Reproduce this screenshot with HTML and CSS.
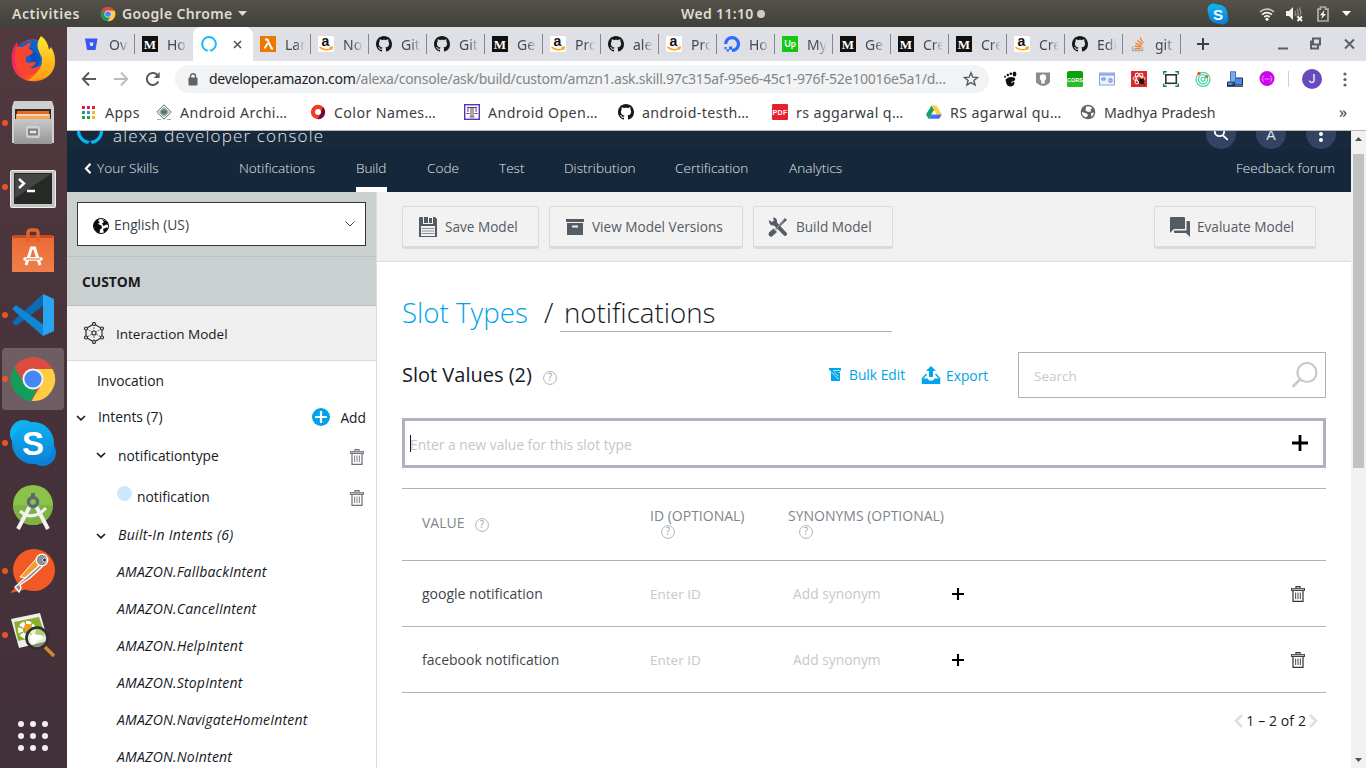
FILE: index.html
```html
<!DOCTYPE html>
<html lang="en">
<head>
<meta charset="utf-8">
<title>Alexa Developer Console</title>
<link rel="stylesheet" href="styles.css">
</head>
<body>
<svg class="defs" width="0" height="0">
  <symbol id="chrome" viewBox="0 0 48 48">
    <circle cx="24" cy="24" r="22" fill="#dd4b3e"/>
    <path d="M24 14H43.6A22 22 0 0 1 22.5 46L32.7 29A10 10 0 0 0 24 14z" fill="#ffcd41"/>
    <path d="M5.5 12.2L15.3 29A10 10 0 0 0 28 33.2L22.5 46A22 22 0 0 1 5.5 12.2z" fill="#119e5a"/>
    <circle cx="24" cy="24" r="10.5" fill="#f4f4f4"/><circle cx="24" cy="24" r="8.6" fill="#4587f4"/>
  </symbol>
  <symbol id="skype" viewBox="0 0 48 48">
    <circle cx="14.500" cy="14.500" r="13.500" fill="#0db3f0"/><circle cx="33.500" cy="33.500" r="13.500" fill="#0a80d8"/><circle cx="24" cy="24" r="21" fill="url(#sky)"/>
    <text x="24" y="36" text-anchor="middle" class="logo-s">S</text>
  </symbol>
  <linearGradient id="sky" x1="0" y1="0" x2="0" y2="1"><stop offset="0" stop-color="#0db3f0"/><stop offset="1" stop-color="#0c80d8"/></linearGradient>
  <linearGradient id="ff" x1="0" y1="0.3" x2="1" y2="0.5"><stop offset="0" stop-color="#e8246c"/><stop offset=".45" stop-color="#fb4a2c"/><stop offset="1" stop-color="#ffb41c"/></linearGradient>
  <linearGradient id="ff2" x1="0" y1="0" x2="0" y2="1"><stop offset="0" stop-color="#ffe92f"/><stop offset="1" stop-color="#ff9a10"/></linearGradient>
  <linearGradient id="steel" x1="0" y1="0" x2="0" y2="1"><stop offset="0" stop-color="#c9c9c9"/><stop offset="1" stop-color="#969696"/></linearGradient>
  <linearGradient id="bag" x1="0" y1="0" x2="0" y2="1"><stop offset="0" stop-color="#ea6a34"/><stop offset="1" stop-color="#f07f4b"/></linearGradient>
  <symbol id="github" viewBox="0 0 16 16"><path fill="#16181b" d="M8 0C3.58 0 0 3.58 0 8c0 3.54 2.29 6.53 5.47 7.59.4.07.55-.17.55-.38 0-.19-.01-.82-.01-1.49-2.01.37-2.53-.49-2.69-.94-.09-.23-.48-.94-.82-1.13-.28-.15-.68-.52-.01-.53.63-.01 1.08.58 1.23.82.72 1.21 1.87.87 2.33.66.07-.52.28-.87.51-1.07-1.78-.2-3.64-.89-3.64-3.95 0-.87.31-1.59.82-2.15-.08-.2-.36-1.02.08-2.12 0 0 .67-.21 2.2.82.64-.18 1.32-.27 2-.27s1.36.09 2 .27c1.53-1.04 2.2-.82 2.2-.82.44 1.1.16 1.92.08 2.12.51.56.82 1.27.82 2.15 0 3.07-1.87 3.75-3.65 3.95.29.25.54.73.54 1.48 0 1.07-.01 1.93-.01 2.2 0 .21.15.46.55.38A8.01 8.01 0 0 0 16 8c0-4.42-3.58-8-8-8z"/></symbol>
  <symbol id="medium" viewBox="0 0 16 16"><rect width="16" height="16" fill="#12100e"/><text x="8" y="12.5" text-anchor="middle" class="logo-m">M</text></symbol>
  <symbol id="amazon" viewBox="0 0 16 16"><rect width="16" height="16" rx="2" fill="#fff"/><text x="7.5" y="9.8" text-anchor="middle" class="logo-a">a</text><path d="M1.5 11.2Q7.5 15.8 13 12.4M11.5 11.6l2.7-.3-.8 2.4" fill="none" stroke="#f9a51a" stroke-width="1.5"/></symbol>
  <symbol id="trash" viewBox="0 0 14 16"><path d="M5 2V.7h4V2M.7 4.3V2.5h12.6v1.8zM2 4.5v10.8h10V4.5" fill="none" stroke="currentColor" stroke-width="1.2"/><path d="M1 3.4h12" stroke="#bbb" stroke-width="1.4"/><path d="M4.6 6.5v6.6M7 6.5v6.6M9.4 6.5v6.6" stroke="currentColor" stroke-width="1.1" opacity=".8"/></symbol>
  <symbol id="help" viewBox="0 0 14 14"><circle cx="7" cy="7" r="6.4" fill="#fff" stroke="#aab7b8" stroke-width="1"/><text x="7" y="10.4" text-anchor="middle" class="help-q">?</text></symbol>
  <symbol id="chev" viewBox="0 0 10 8"><path d="M1 2l4 3.8L9 2" fill="none" stroke="#16191f" stroke-width="1.6"/></symbol>
  <symbol id="plus" viewBox="0 0 16 16"><path d="M8 0v16M0 8h16" stroke="#000" stroke-width="2.800"/></symbol>
</svg>

<header class="topbar">
  <span class="activities">Activities</span>
  <svg class="tb-chrome" width="16" height="16"><use href="#chrome"/></svg>
  <span class="appname">Google Chrome</span>
  <svg class="tb-caret" width="9" height="5"><path d="M0 0h9L4.5 5z" fill="#dfdbd2"/></svg>
  <span class="clock">Wed 11:10</span><i class="clock-dot"></i>
  <span class="tray">
    <svg width="22" height="22"><use href="#skype"/></svg>
    <svg class="wifi" width="16" height="16" viewBox="0 0 16 16" fill="none" stroke="#f2f1ee" stroke-width="1.6"><path d="M1 5.8Q8 .5 15 5.8" opacity=".75"/><path d="M3 8.6Q8 4.6 13 8.6M5.2 11Q8 8.8 10.8 11"/><circle cx="8" cy="13.3" r="1.5" fill="#fff" stroke="none"/></svg>
    <svg class="vol" width="18" height="16" viewBox="0 0 18 16"><path d="M0 5h3l4-4v13L3 10H0z" fill="#f2f1ee"/><path d="M9 5q1.5 2.5 0 5M11 3q2.6 4.5 0 8M13 1.5q3 4.5 1 8" fill="none" stroke="#8e8b85" stroke-width="1.4"/><path d="M11.5 10.5l4.5 4.5m0-4.5L11.5 15" stroke="#fff" stroke-width="1.8"/></svg>
    <svg class="bat" width="12" height="16" viewBox="0 0 12 16"><path d="M1 3.2h2.5V1h5v2.2H11V15H1z" fill="none" stroke="#b1afa9" stroke-width="1.7"/><path d="M7.5 4L3 9.2h2.5L4.2 13 9 8H6.4z" fill="#fff"/></svg>
    <svg class="arrow" width="9" height="5"><path d="M0 0h9L4.5 5z" fill="#fff"/></svg>
  </span>
</header>

<div class="desktop">
<nav class="dock">
  <svg class="app" viewBox="0 0 67 64"><path d="M17 15l1 5Q24 12 33 12.500q6 0 9 2.500l6 6q7 7 7 14a21.500 19.500 0 0 1-43 0q-2-12 5-20z" fill="url(#ff)"/><path d="M19 19q6-6 14-6t11 5q3 6 2 14-2 10-11 10-8-1-12-7z" fill="#0c62cf"/><path d="M28 20q8 3 12 11-1 9-8 10z" fill="#0a3f9e" opacity=".5"/><path d="M16 20h7q4-4 8-5l-2 7 4 2q0 4-6 5-3 5 1 7 4-1 8-1-1 5-7 5 5 3 12-2-3 10-13 10Q15 46 15 30z" fill="#f9452f"/><path d="M41 9q-5 7-3 13 2 5 4 9 1 12-12 21-2 1-4 1 6 2 14-1 14-5 15-18 0-8-4-14l-2 3Q48 14 41 9z" fill="url(#ff2)"/></svg>
  <svg class="app" viewBox="0 0 67 64"><circle cx="5" cy="32" r="3" fill="#e95420"/><path d="M14 10h38l2 6v36H12V16z" fill="#cfcfcf"/><path d="M15 18h36v13H15z" fill="#2f2b29"/><path d="M17 20h32v8H17z" fill="#e06a22"/><path d="M16 23h34v6H16z" fill="#f4a75c"/><path d="M17 24h32" stroke="#fff"/><path d="M14 28h38v25H14z" fill="url(#steel)"/><rect x="27" y="36" width="12" height="10" rx="1.5" fill="#aaa" stroke="#ddd" stroke-width="1.5"/><rect x="29" y="39" width="8" height="4" fill="#e5e5e5" stroke="#555"/></svg>
  <svg class="app" viewBox="0 0 67 64"><circle cx="5" cy="32" r="3" fill="#e95420"/><rect x="10.5" y="15.5" width="45" height="37" rx="1" fill="#c3c5c3" stroke="#eee"/><path d="M14 18h38v31H14z" fill="#272927"/><path d="M15 19h36L15 43z" fill="#444644"/><path d="M19 24l5 4.5-5 4.5M27 36h8" stroke="#fff" stroke-width="2.4" fill="none"/></svg>
  <svg class="app" viewBox="0 0 67 64"><path d="M12 17h42v36H12z" fill="url(#bag)"/><path d="M12 19l2-3h38l2 3z" fill="#c84d1d"/><path d="M28 23v-9q0-3 3-3h4q3 0 3 3v9" fill="none" stroke="#e2622e" stroke-width="3.5"/><path d="M26 46l5.5-17h3L40 46M28 39.5h10" fill="none" stroke="#fff" stroke-width="3"/><path d="M25 40h16" stroke="#fff" stroke-width="3.6" stroke-linecap="round"/><path d="M26 40h14" stroke="#ef7a45" stroke-width="1.200"/></svg>
  <svg class="app" viewBox="0 0 67 64"><circle cx="5" cy="32" r="3" fill="#e95420"/><path d="M43 11L12 39l4 4 27-20z" fill="#0a6bb3"/><path d="M12 26l4-4 28 20-1 11z" fill="#0f87d2"/><path d="M43 11l11 5v32l-11 5z" fill="#2aa4f0"/></svg>
  <svg class="app" viewBox="0 0 67 64"><rect x="2" y="1" width="62" height="62" rx="4" fill="#6e5e64"/><circle cx="5" cy="32" r="3" fill="#e95420"/><use href="#chrome" x="9" y="8" width="48" height="48"/></svg>
  <svg class="app" viewBox="0 0 67 64"><circle cx="5" cy="32" r="3" fill="#e95420"/><use href="#skype" x="9" y="8" width="48" height="48"/></svg>
  <svg class="app" viewBox="0 0 67 64"><circle cx="33" cy="30" r="20" fill="#8bc34a"/><path d="M13 30a20 20 0 0 0 40 0z" fill="#7cb342"/><path d="M30 31L18 54M36 31l12 23" stroke="#f1f1f1" stroke-width="4"/><path d="M20 36q13 11 26-3" fill="none" stroke="#f1f1f1" stroke-width="3"/><circle cx="33" cy="27" r="4.5" fill="none" stroke="#5d6b70" stroke-width="3.5"/><path d="M31 18h4v4h-4z" fill="#5d6b70"/></svg>
  <svg class="app" viewBox="0 0 67 64"><circle cx="5" cy="32" r="3" fill="#e95420"/><path d="M10 54l12-12 6 8z" fill="#f15a24"/><circle cx="34" cy="31" r="21" fill="#f15a24"/><path d="M36 20l3 6-11 13-8-1z" fill="#f99a2c" stroke="#fff"/><path d="M42 24L23 41l-8 7 4 5 2-4-1-3 10-7 12-11z" fill="#8d8f92" stroke="#fff" stroke-width="1.4"/><circle cx="42" cy="21" r="5.8" fill="#8d8f92" stroke="#fff" stroke-width="1.3"/><circle cx="44.5" cy="21" r="2" fill="#333" stroke="#fff" stroke-width=".8"/></svg>
  <svg class="app" viewBox="0 0 67 64"><circle cx="5" cy="32" r="3" fill="#e95420"/><path d="M11 16l29-6 8 28-29 7z" fill="#eee"/><path d="M14 19l25-5 6 18-27 6z" fill="#8fae2c"/><circle cx="27" cy="27" r="6.500" fill="none" stroke="#fff" stroke-width="5" stroke-dasharray="4.500 1.300"/><circle cx="28" cy="25" r="4" fill="#f29c1c"/><circle cx="37" cy="35" r="10.500" fill="#d5e6ad" fill-opacity=".5" stroke="#2c3034" stroke-width="2.600"/><path d="M30 34q3-6 7-2 6-1 6 4l-6 2-3 4q-4-2-4-8z" fill="#fff"/><path d="M45 44l9 9" stroke="#cf8b2f" stroke-width="3.500"/></svg>
  <svg class="grid-btn" width="32" height="32" viewBox="0 0 32 32" fill="#f2f0f0"><circle cx="4" cy="4" r="3"/><circle cx="16" cy="4" r="3"/><circle cx="28" cy="4" r="3"/><circle cx="4" cy="16" r="3"/><circle cx="16" cy="16" r="3"/><circle cx="28" cy="16" r="3"/><circle cx="4" cy="28" r="3"/><circle cx="16" cy="28" r="3"/><circle cx="28" cy="28" r="3"/></svg>
</nav>

<div class="browser">
  <div class="tabs">
    <div class="tab"><svg width="16" height="16" viewBox="0 0 16 16"><path d="M1 2.5h12.5l-2 11.5h-8.500z" fill="#3a56f7"/><path d="M5.5 6.500h4l-.6 3.600H6.200z" fill="#dee0e6"/></svg><span>Ov</span></div>
    <div class="tab nosep"><svg width="16" height="16"><use href="#medium"/></svg><span>Ho</span></div>
    <div class="tab active"><svg width="16" height="16" viewBox="0 0 16 16"><circle cx="8" cy="8" r="6.900" fill="none" stroke="#12bff5" stroke-width="2"/><path d="M6 16l2-2.500 2 2.500z" fill="#fff"/></svg><svg class="close" width="9" height="9" viewBox="0 0 9 9"><path d="M1 1l7 7M8 1L1 8" stroke="#50545a" stroke-width="1.600"/></svg></div>
    <div class="tab"><svg width="16" height="16" viewBox="0 0 16 16"><rect width="16" height="16" fill="#ee7700"/><path d="M5 3.500h2.500l4 9H13M7.800 7L4.500 12.500" fill="none" stroke="#fff" stroke-width="1.900"/></svg><span>Lam</span></div>
    <div class="tab"><svg width="16" height="16"><use href="#amazon"/></svg><span>No</span></div>
    <div class="tab"><svg width="16" height="16"><use href="#github"/></svg><span>Git</span></div>
    <div class="tab"><svg width="16" height="16"><use href="#github"/></svg><span>Git</span></div>
    <div class="tab"><svg width="16" height="16"><use href="#medium"/></svg><span>Ge</span></div>
    <div class="tab"><svg width="16" height="16"><use href="#amazon"/></svg><span>Pro</span></div>
    <div class="tab"><svg width="16" height="16"><use href="#github"/></svg><span>ale</span></div>
    <div class="tab"><svg width="16" height="16"><use href="#amazon"/></svg><span>Pro</span></div>
    <div class="tab"><svg width="16" height="16" viewBox="0 0 16 16"><path d="M1.700 8A6.400 6.400 0 1 1 8 14.400" fill="none" stroke="#2c6bff" stroke-width="3.200"/><path d="M5 10.500h3.200V13.800H5zM2.600 13.300H5v2.200H2.600zM.5 11h2.100v2.300H.5z" fill="#2c6bff"/></svg><span>Ho</span></div>
    <div class="tab"><svg width="16" height="16" viewBox="0 0 16 16"><rect width="16" height="16" fill="#14c811"/><text x="8" y="11" text-anchor="middle" class="logo-up">Up</text></svg><span>My</span></div>
    <div class="tab"><svg width="16" height="16"><use href="#medium"/></svg><span>Ge</span></div>
    <div class="tab"><svg width="16" height="16"><use href="#medium"/></svg><span>Cre</span></div>
    <div class="tab"><svg width="16" height="16"><use href="#medium"/></svg><span>Cre</span></div>
    <div class="tab"><svg width="16" height="16"><use href="#amazon"/></svg><span>Cre</span></div>
    <div class="tab"><svg width="16" height="16"><use href="#github"/></svg><span>Edi</span></div>
    <div class="tab"><svg width="16" height="16" viewBox="0 0 16 16"><path d="M2.500 10.500v4h10v-4" fill="none" stroke="#a9abae" stroke-width="1.300"/><path d="M4.500 12.600h6.300M4.700 10l6.200 1M5.500 7.200l5.800 2.700M7.400 4.300l4.800 4.300M10 1.500l3.200 5.700" stroke="#f48024" stroke-width="1.300"/></svg><span>git</span></div>
    <svg class="newtab" width="12" height="12" viewBox="0 0 12 12"><path d="M6 0v12M0 6h12" stroke="#3c4043" stroke-width="2"/></svg>
    <svg class="win" width="80" height="14" viewBox="0 0 80 14" fill="none" stroke="#5b5f64" stroke-width="2"><path d="M1 11.500h10M36 1.500h7v6h-7zM36 4.500h-2v7h7v-3M68 2.500l9 9M77 2.500l-9 9"/></svg>
  </div>

  <div class="toolbar">
    <svg width="16" height="16" viewBox="0 0 16 16"><path d="M15 8H2M8 1.500L1.800 8 8 14.500" fill="none" stroke="#565a60" stroke-width="1.900"/></svg>
    <svg width="16" height="16" viewBox="0 0 16 16"><path d="M1 8h13M8 1.500L14.200 8 8 14.500" fill="none" stroke="#b9bbbe" stroke-width="1.900"/></svg>
    <svg width="16" height="16" viewBox="0 0 16 16"><path d="M13.300 10.500A6 6 0 1 1 13 5" fill="none" stroke="#565a60" stroke-width="2"/><path d="M14.700 1v6h-6z" fill="#565a60"/></svg>
    <div class="omni">
      <svg width="10" height="13" viewBox="0 0 10 13"><rect x=".5" y="4.500" width="9" height="8" rx="1" fill="#5f6368"/><path d="M2.500 5V3.200a2.500 2.500 0 0 1 5 0V5" fill="none" stroke="#5f6368" stroke-width="1.400"/></svg>
      <span class="url"><b>developer.amazon.com</b>/alexa/console/ask/build/custom/amzn1.ask.skill.97c315af-95e6-45c1-976f-52e10016e5a1/d…</span>
      <svg class="star" width="16" height="16" viewBox="0 0 16 16"><path d="M8 1.800l1.800 4.400 4.700.3-3.600 3 1.200 4.600L8 11.600l-4.100 2.500 1.200-4.600-3.600-3 4.700-.3z" fill="none" stroke="#565a60" stroke-width="1.400"/></svg>
    </div>
    <div class="exts">
      <svg width="16" height="16" viewBox="0 0 16 16"><path d="M2.500 8.500Q7 4.500 12 7q1 3-3 3.500l-1 1.500q2 0 2-1.500l1.500.5q0 4.500-4.500 4.500-4-.5-4.500-7z" fill="#111"/><ellipse cx="11.500" cy="3" rx="1.900" ry="2.600" fill="#111"/><circle cx="7.800" cy="2.800" r="1.300" fill="#111"/><circle cx="4.800" cy="4" r="1.200" fill="#111"/><circle cx="2" cy="5.800" r="1" fill="#111"/></svg>
      <svg width="16" height="16" viewBox="0 0 16 16"><path d="M1 1.500h14v9.500q-2 3-7 4-5-1-7-4z" fill="#8b8b8b"/><circle cx="8" cy="6.500" r="3.200" fill="#fff"/><path d="M6.300 8h3.400v4.500H6.300z" fill="#fff"/></svg>
      <svg width="16" height="16" viewBox="0 0 16 16"><rect width="16" height="16" rx="2" fill="#0aa10a"/><path d="M0 9h16v5q0 2-2 2H2q-2 0-2-2z" fill="#2bbd27"/><text x="8" y="10.500" text-anchor="middle" class="logo-cors">CORS</text></svg>
      <svg width="16" height="16" viewBox="0 0 16 16"><rect x=".5" y="2" width="15" height="12" fill="#eaf1fc" stroke="#87a7dc"/><path d="M1 3.500h14" stroke="#87a7dc" stroke-width="2"/><path d="M3 7h3v2H3zM10 8h3v3h-3z" fill="#cfdef6" stroke="#5f87cb"/></svg>
      <svg width="16" height="16" viewBox="0 0 16 16"><rect width="16" height="16" fill="#dc2a2c"/><g fill="none" stroke="#fff" stroke-width=".9"><ellipse cx="8" cy="7.500" rx="6" ry="2.400"/><ellipse cx="8" cy="7.500" rx="6" ry="2.400" transform="rotate(60 8 7.500)"/><ellipse cx="8" cy="7.500" rx="6" ry="2.400" transform="rotate(120 8 7.500)"/></g><ellipse cx="10.500" cy="10.500" rx="2.500" ry="3" fill="#1b1212"/><path d="M7 9l7 5M13 8l-5 6" stroke="#1b1212" stroke-width=".8"/></svg>
      <svg width="16" height="16" viewBox="0 0 16 16"><rect x="2.800" y="3.800" width="10.500" height="8.500" fill="#fff" stroke="#333" stroke-width="1.600"/><path d="M.7 3.500V.7h3M12.300.7h3v2.800M15.300 12.500v2.800h-3M3.700 15.300h-3v-2.800" fill="none" stroke="#138a36" stroke-width="1.400"/></svg>
      <svg width="16" height="16" viewBox="0 0 16 16" fill="none" stroke="#3bd7a0" stroke-width="1.200"><circle cx="8" cy="8.300" r="7"/><circle cx="8" cy="8.300" r="4.600"/><circle cx="8" cy="8.300" r="2"/><g fill="#f4502a" stroke="none"><circle cx="4" cy="2.500" r="1.700"/><circle cx="11.500" cy="5.500" r="1.600"/></g></svg>
      <svg width="16" height="16" viewBox="0 0 16 16"><path d="M6 7h9.500v7H6zM.5 11h7v3.500h-7z" fill="#4a8cf0" stroke="#222c3d"/><path d="M0 15.200h16" stroke="#222c3d" stroke-width="1.200"/><rect x="3.500" y=".8" width="5" height="10" fill="#74aefa" stroke="#4b6fa8"/></svg>
      <svg width="16" height="16" viewBox="0 0 16 16"><circle cx="8" cy="7.500" r="7.500" fill="#cb07ee"/><path d="M4.800 5.200q-1.500 0-1 1.500.1 1.200-1 1.200 1.100 0 1 1.300-.5 1.500 1 1.500M11.200 5.200q1.500 0 1 1.500-.1 1.200 1 1.200-1.100 0-1 1.300.5 1.500-1 1.500M5.800 8h4.800" fill="none" stroke="#f7b9ff" stroke-width=".9" stroke-dasharray="1.600 .4"/></svg>
    </div>
    <span class="avatar">J</span>
    <svg class="kebab" width="4" height="16" viewBox="0 0 4 16" fill="#5f6368"><circle cx="2" cy="3" r="1.600"/><circle cx="2" cy="8.500" r="1.600"/><circle cx="2" cy="14" r="1.600"/></svg>
  </div>

  <div class="bookmarks">
    <a><svg class="apps" width="13" height="13" viewBox="0 0 13 13"><path d="M0 0h3v3H0zM5 0h3v3H5zM10 0h3v3h-3z" fill="#ea1a36"/><path d="M0 5h3v3H0zM0 10h3v3H0z" fill="#1da45b"/><path d="M5 5h3v3H5z" fill="#4284f4"/><path d="M5 10h3v3H5z" fill="#1da45b"/><path d="M10 5h3v3h-3zM10 10h3v3h-3z" fill="#fbbc05"/></svg>Apps</a>
    <a><svg width="16" height="16" viewBox="0 0 16 16"><path d="M8 .8L15.200 8 8 15.200.8 8zM8 3.500L12.500 8 8 12.500 3.500 8z" fill="#fff" stroke="#666" stroke-width="1"/><circle cx="8" cy="8" r="3" fill="#6d8a6d"/><path d="M5 8h6" stroke="#2c7d48" stroke-width="1.500"/><path d="M1 15.500h4M11 15.500h4" stroke="#aaa"/></svg>Android Archi…</a>
    <a><svg width="16" height="16" viewBox="0 0 16 16"><circle cx="8" cy="8" r="7.200" fill="#f43a26"/><path d="M8 15.200A7.200 7.200 0 0 0 13 3z" fill="#640d3e"/><circle cx="8" cy="8" r="3" fill="#fff"/></svg>Color Names…</a>
    <a><svg width="16" height="16" viewBox="0 0 16 16"><rect x=".7" y=".7" width="14.600" height="14.600" fill="#fff" stroke="#5b2fc0" stroke-width="1.400"/><path d="M3 3.500h10M7 3.500v9M9 3.500v9M5.500 13h5M4 4v4M12 4v4M2.500 9.500h3M10.500 9.500h3" stroke="#4f4a58" stroke-width="1"/></svg>Android Open…</a>
    <a><svg width="16" height="16"><use href="#github"/></svg>android-testh…</a>
    <a><svg width="16" height="16" viewBox="0 0 16 16"><rect width="16" height="16" rx="1" fill="#e8202e"/><text x="8" y="10.500" text-anchor="middle" class="logo-pdf">PDF</text></svg>rs aggarwal q…</a>
    <a><svg width="16" height="16" viewBox="0 0 16 16"><path d="M5.500 1.500L0 10.500l2.500 4.200L8.200 5.800z" fill="#18a35d"/><path d="M5.500 1.500h5l5.300 9h-5z" fill="#ffce3d"/><path d="M2.500 14.700l2.600-4.200h10.700l-2.500 4.200z" fill="#4571ee"/></svg>RS agarwal qu…</a>
    <a class="full"><svg width="16" height="16" viewBox="0 0 16 16"><circle cx="8" cy="8" r="7.300" fill="#5f6368"/><path d="M6 2.500q4-1 6.500 1.500l-2 1.500.5 2-3 .5L5.500 6.500zM1.800 8l5.200 1.500 1 2-2 2Q2 12 1.800 8zM11 9l3-.5q-.5 3-2.500 4.500z" fill="#fff"/></svg>Madhya Pradesh</a>
    <span class="more">»</span>
  </div>

  <div class="page">
    <div class="view">
      <div class="brand">
        <svg width="28" height="28" viewBox="0 0 28 28"><circle cx="14" cy="14" r="11.500" fill="none" stroke="#00b8f4" stroke-width="3.200"/><path d="M11.500 28l2.500-4.500 2.500 4.500z" fill="#17283a"/></svg>
        <span class="brandname">alexa developer console</span>
        <span class="round"><svg width="16" height="16" viewBox="0 0 16 16" fill="none" stroke="#fff" stroke-width="1.800"><circle cx="6.500" cy="5.500" r="4.700"/><path d="M10 9.500l4.800 4.300"/></svg></span>
        <span class="round">A</span>
        <span class="round"><svg width="4" height="16" viewBox="0 0 4 16" fill="#fff"><circle cx="2" cy="2" r="2"/><circle cx="2" cy="8" r="2"/><circle cx="2" cy="14" r="2"/></svg></span>
      </div>
      <nav class="menu">
        <a class="back"><svg width="8" height="11" viewBox="0 0 8 11"><path d="M6.500.8L2 5.500l4.500 4.700" fill="none" stroke="#fff" stroke-width="2.200"/></svg>Your Skills</a>
        <a>Notifications</a><a class="on">Build</a><a>Code</a><a>Test</a><a>Distribution</a><a>Certification</a><a>Analytics</a>
        <a class="feedback">Feedback forum</a>
      </nav>
      <div class="cols">
        <aside class="side">
          <div class="lang"><div class="select">
            <svg class="globe" width="16" height="16" viewBox="0 0 16 16"><circle cx="8" cy="8" r="7.500" fill="#fff" stroke="#0b0b0b"/><path d="M.5 7Q1 3 4 1.500L6.500 1 5 3l2 1-2 2 3.500 1.500L9 10l-2 1.500-.5 4Q2 15 .5 7zM9 1.500l4.500 1.500 2 4-2-.5-3 1.500L9 5.500l2-1.500zM10 11l3.500-1.500L15 10q-1 3.500-4 5z" fill="#0b0b0b"/></svg>
            <span>English (US)</span>
            <svg class="dd" width="10" height="6" viewBox="0 0 10 6"><path d="M.5.5L5 5 9.500.5" fill="none" stroke="#444"/></svg>
          </div></div>
          <div class="custom">CUSTOM</div>
          <div class="model">
            <svg width="22" height="22" viewBox="0 0 22 22" fill="#efefef" stroke="#2b2f36" stroke-width="1.200"><path d="M11 2l8 4.500v9L11 20l-8-4.500v-9z"/><path d="M11 2v18M3 6.500l16 9M19 6.500l-16 9" stroke-width=".7" stroke-dasharray="2 1"/><circle cx="11" cy="2" r="1.500"/><circle cx="19" cy="6.500" r="1.500"/><circle cx="19" cy="15.500" r="1.500"/><circle cx="11" cy="20" r="1.500"/><circle cx="3" cy="15.500" r="1.500"/><circle cx="3" cy="6.500" r="1.500"/><circle cx="11" cy="11" r="2"/></svg>
            <span>Interaction Model</span>
          </div>
          <ul class="tree">
            <li class="invocation">Invocation</li>
            <li class="intents"><svg width="10" height="8"><use href="#chev"/></svg><span>Intents (7)</span><svg class="addicon" width="18" height="18" viewBox="0 0 18 18"><circle cx="9" cy="9" r="9" fill="#00a4e8"/><path d="M9 3v12M3 9h12" stroke="#fff" stroke-width="2.200"/></svg><span class="add">Add</span></li>
            <li class="ntype"><svg width="10" height="8"><use href="#chev"/></svg><span>notificationtype</span><svg class="bin" width="14" height="16"><use href="#trash"/></svg></li>
            <li class="slot"><i></i><span>notification</span><svg class="bin" width="14" height="16"><use href="#trash"/></svg></li>
            <li class="builtin"><svg width="10" height="8"><use href="#chev"/></svg><span>Built-In Intents (6)</span></li>
            <li class="amz">AMAZON.FallbackIntent</li>
            <li class="amz">AMAZON.CancelIntent</li>
            <li class="amz">AMAZON.HelpIntent</li>
            <li class="amz">AMAZON.StopIntent</li>
            <li class="amz">AMAZON.NavigateHomeIntent</li>
            <li class="amz">AMAZON.NoIntent</li>
          </ul>
        </aside>
        <main class="main">
          <div class="actions">
            <button class="btn save"><svg width="18" height="20" viewBox="0 0 18 20"><path d="M0 1q0-1 1-1h15l2 2v18H0z" fill="#545b64"/><path d="M4 0h10v7H4z" fill="#f2f2f2"/><path d="M5 0h4v6H5z" fill="#545b64"/><path d="M10 1h3v5h-3z" fill="#545b64"/><path d="M2 9h14v10H2z" fill="#f2f2f2"/><path d="M2.500 11.500h13M2.500 14h13M2.500 16.500h13" stroke="#8b9096" stroke-width="1.200"/></svg>Save Model</button>
            <button class="btn view-v"><svg width="18" height="16" viewBox="0 0 18 16"><path d="M0 0h18v3H0zM1 4h16v12H1z" fill="#545b64"/><path d="M6 6.500h6v2H6z" fill="#f2f2f2"/></svg>View Model Versions</button>
            <button class="btn build"><svg width="20" height="20" viewBox="0 0 20 20"><path d="M17 1l2 2L8 13l-1-1z" fill="#545b64"/><path d="M5.500 11.500L9 15l-5 4.500Q1 20.500.5 17q0-1 1-2z" fill="#545b64"/><path d="M.7 3l3.300 2 1.800-1.500L5 .5q4.500 0 4 5L18.800 16q1 3-2.300 3L6 8.500Q1 9 .7 3z" fill="#545b64"/><path d="M6.500 13.500L16 3.500" stroke="#f2f2f2" stroke-width=".5"/></svg>Build Model</button>
            <button class="btn eval"><svg width="20" height="20" viewBox="0 0 20 20"><path d="M0 1q0-1 1-1h13q1 0 1 1v11H4L0 16z" fill="#545b64"/><path d="M16.500 4H19q1 0 1 1v15l-4-4H5q-1 0-1-1v-1.500h12.500z" fill="#545b64"/></svg>Evaluate Model</button>
          </div>
          <h1 class="title"><a>Slot Types</a><span class="slash">/</span><span class="name">notifications</span></h1>
          <div class="values">
            <h2>Slot Values (2)</h2>
            <svg class="q" width="14" height="14"><use href="#help"/></svg>
            <a class="bulk"><svg width="12" height="13" viewBox="0 0 12 13"><path d="M0 0h12v2l-1 1v10H2V3L0 2z" fill="#00a4e8"/><path d="M4 2.500h7M2.500 4l6 6.500 1.500.5M5 3.500l4.500 5M9.500 4.500H11" stroke="#fff" stroke-width=".7" fill="none"/></svg>Bulk Edit</a>
            <a class="export"><svg width="20" height="18" viewBox="0 0 20 18"><path d="M10 0l5 5h-3v6H8V5H5z" fill="#00a4e8"/><path d="M5.500 8L1.500 12.500V17h17v-4.500L14.500 8" fill="none" stroke="#00a4e8" stroke-width="1.500"/><path d="M1 12.500h5.500l1.500 2h4l1.500-2H19V18H1z" fill="#00a4e8"/></svg>Export</a>
            <div class="search"><span>Search</span><svg width="27" height="27" viewBox="0 0 27 27"><circle cx="16" cy="10.500" r="9.500" fill="none" stroke="#c9c9c9" stroke-width="2.200"/><path d="M9 17.500L1.500 25" stroke="#c9c9c9" stroke-width="2.600"/></svg></div>
          </div>
          <div class="newvalue"><i></i><span>Enter a new value for this slot type</span><svg width="16" height="16"><use href="#plus"/></svg></div>
          <div class="table">
            <div class="row head"><span>VALUE<svg class="hq" width="14" height="14"><use href="#help"/></svg></span><span>ID (OPTIONAL)<svg class="hb" width="14" height="14"><use href="#help"/></svg></span><span class="wide">SYNONYMS (OPTIONAL)<svg class="hb" width="14" height="14"><use href="#help"/></svg></span></div>
            <div class="row"><span>google notification</span><span class="ph">Enter ID</span><span class="ph syn">Add synonym</span><svg width="12" height="12"><use href="#plus"/></svg><svg class="del" width="14" height="16"><use href="#trash"/></svg></div>
            <div class="row"><span>facebook notification</span><span class="ph">Enter ID</span><span class="ph syn">Add synonym</span><svg width="12" height="12"><use href="#plus"/></svg><svg class="del" width="14" height="16"><use href="#trash"/></svg></div>
          </div>
          <div class="pager"><svg width="9" height="14" viewBox="0 0 9 14"><path d="M8 1L2 7l6 6" fill="none" stroke="#dfdfe3" stroke-width="2.600"/></svg><span>1 – 2 of 2</span><svg width="9" height="14" viewBox="0 0 9 14"><path d="M1 1l6 6-6 6" fill="none" stroke="#dfdfe3" stroke-width="2.600"/></svg></div>
        </main>
      </div>
    </div>
    <div class="scroll"><svg width="7" height="4"><path d="M0 4h7L3.500 0z" fill="#505050"/></svg><div class="thumb"></div><svg width="7" height="4"><path d="M0 0h7L3.500 4z" fill="#505050"/></svg></div>
  </div>
</div>
</div>
</body>
</html>
```
FILE: styles.css
```css
* { box-sizing: border-box; }
body { margin: 0; width: 1366px; height: 768px; overflow: hidden; font-family: "Noto Sans", "Open Sans", sans-serif; color: #16191f; }
svg { flex: none; display: block; }
.defs { position: absolute; }

.logo-s { font: 700 33px "Liberation Sans", sans-serif; fill: #fff; }
.logo-m { font: 700 13px "Liberation Serif", serif; fill: #fff; }
.logo-a { font: 700 14px "Liberation Sans", sans-serif; fill: #111; }
.logo-up { font: 700 9px Lato, sans-serif; fill: #fff; }
.logo-cors { font: 700 5.5px "Liberation Sans", sans-serif; fill: #fff; }
.logo-pdf { font: 700 7px "Liberation Sans", sans-serif; fill: #fff; }
.help-q { font: 10px "Open Sans", sans-serif; fill: #95a0a1; }

.topbar { height: 27px; display: flex; align-items: center; background: linear-gradient(#55524b, #413f3a); color: #dfdbd2; font-size: 14px; font-weight: 600; line-height: 26px; letter-spacing: .35px; white-space: nowrap; }
.activities { width: 88px; padding-left: 12px; letter-spacing: .55px; }
.tb-chrome { margin: 0 6px 0 12px; }
.appname { width: 111px; }
.tb-caret { margin-left: 5px; }
.clock { width: 73px; margin-left: 434px; }
.clock-dot { width: 8px; height: 8px; border-radius: 50%; background: #cfccc5; margin-left: 3px; }
.tray { display: flex; align-items: center; margin-left: auto; padding-right: 15px; }
.wifi { margin-left: 30px; }
.vol { margin-left: 11px; }
.bat { margin-left: 13px; }
.arrow { margin-left: 13px; }

.desktop { display: flex; height: 741px; }
.dock { width: 67px; background: linear-gradient(#513a3f, #47323a 50%, #42303a); display: flex; flex-direction: column; }
.app { width: 67px; height: 64px; }
.grid-btn { margin: 53px 0 0 17px; }

.browser { width: 1299px; display: flex; flex-direction: column; background: #fff; }
.tabs { height: 34px; background: #dee0e6; padding-left: 10px; display: flex; align-items: center; }
.tab { width: 58px; height: 34px; padding-left: 7px; display: flex; align-items: center; position: relative; font-size: 14px; color: #45494d; }
.tab::after { content: ""; position: absolute; right: 0; top: 7px; width: 1px; height: 20px; background: #84878c; }
.tab span { width: 20px; margin-left: 9px; overflow: hidden; white-space: nowrap; -webkit-mask-image: linear-gradient(90deg, #000 50%, transparent); mask-image: linear-gradient(90deg, #000 50%, transparent); }
.nosep::after, .active::after { display: none; }
.active { width: 60px; background: #fff; border-radius: 8px 8px 0 0; padding-left: 8px; }
.close { margin-left: 16px; }
.newtab { margin-left: 16px; }
.win { margin-left: 68px; }

.toolbar { height: 36px; display: flex; align-items: center; padding-left: 14px; }
.toolbar > svg { margin-right: 16px; }
.omni { width: 814px; height: 28px; margin-left: -2px; border-radius: 14px; background: #f1f3f4; display: flex; align-items: center; padding: 0 10px 0 13px; }
.url { width: 742px; margin: -1px 0 0 11px; font-size: 14px; letter-spacing: -.25px; color: #80868b; white-space: nowrap; }
.url b { font-weight: 400; color: #202124; }
.star { margin-left: 12px; }
.exts { display: flex; gap: 16px; margin-left: 14px; padding-right: 13px; border-right: 1px solid #cfd1d4; }
.avatar { width: 20px; height: 20px; border-radius: 50%; margin-left: 13px; background: #674bbd; color: #fff; font: 12px/20px Roboto, sans-serif; text-align: center; }
.toolbar > .kebab { margin: 0 0 0 21px; }

.bookmarks { height: 33px; padding: 0 0 3px 14px; display: grid; grid-template-columns: 75px repeat(7, 154px) 20px; align-items: center; font-size: 14.2px; letter-spacing: .4px; color: #3c4043; }
.bookmarks a { display: flex; align-items: center; gap: 8px; white-space: nowrap; }
.bookmarks a.full { letter-spacing: 0; }
.bookmarks .apps { margin: 0 2px 0 1px; }
.more { margin-left: 105px; font-size: 16px; }

.page { height: 638px; border-top: 1px solid #b6b8ba; display: flex; overflow: hidden; background: #fff; }
.view { width: 1284px; font-family: "Open Sans", "Noto Sans", sans-serif; font-size: 13.8px; }
.scroll { width: 15px; background: #f1f1f1; display: flex; flex-direction: column; align-items: center; padding: 6px 0; }
.thumb { width: 11px; height: 314px; margin: 13px 0 auto; background: #c1c1c1; }

.brand { height: 30px; margin-top: -12px; padding: 0 15px 0 9px; display: flex; align-items: center; background: #17293a; }
.brand > svg { margin-top: -6px; }
.brandname { margin: 2px auto 0 9px; font-size: 17px; font-weight: 300; letter-spacing: 1.18px; color: #e4e8ea; }
.round { width: 30px; height: 30px; margin-left: 20px; border-radius: 50%; background: #344263; color: #dfe3ea; display: flex; align-items: center; justify-content: center; font-size: 15px; }
.menu { height: 43px; display: grid; grid-template-columns: 172px 117px 71px 72px 65px 111px 114px 100px 1fr; background: #15273b; color: #e3e6e8; line-height: 38px; font-weight: 300; font-size: 13.6px; padding-right: 16px; white-space: nowrap; }
.menu .back { display: flex; align-items: center; gap: 5px; height: 38px; padding-left: 17px; }
.menu .on { width: 31px; border-bottom: 5px solid #fff; letter-spacing: -.1px; }
.feedback { text-align: right; }

.cols { display: flex; height: 576px; }
.side { width: 310px; border-right: 1px solid #d9dcdc; }
.lang { height: 64px; background: #cacfd0; padding: 10px; }
.select { height: 44px; border: 1px solid #33383b; background: #fff; display: flex; align-items: center; padding: 0 10px 0 15px; color: #3c4348; }
.select span { margin: 0 auto 0 5px; }
.globe { margin-top: 3px; }
.custom { height: 50px; line-height: 49px; background: #cacfd0; border-top: 1px solid #bcc2c3; border-bottom: 1px solid #b8bebf; padding-left: 15px; font-weight: 700; }
.model { height: 55px; background: #efefef; border-bottom: 1px solid #dadcdc; display: flex; align-items: center; padding-left: 16px; gap: 11px; font-size: 13.5px; }
.model span { margin-top: 2px; }
.tree { list-style: none; margin: 0; padding: 0; }
.tree li { display: flex; align-items: center; height: 37px; padding-right: 12px; }
.tree .invocation { height: 38px; padding-left: 30px; }
.tree .intents { padding-left: 9px; }
.intents span { margin: -2px 0 0 12px; }
.intents .addicon { margin: -2px 0 0 auto; }
.intents .add { margin: 0 -2px 0 10px; }
.tree .ntype { height: 38px; padding-left: 29px; }
.ntype span, .builtin span { margin-left: 12px; }
.builtin span { margin-top: -2px; }
.tree .bin { margin: 4px 0 0 auto; color: #6d7078; }
.tree .slot { height: 44px; padding-left: 50px; }
.slot i { width: 15px; height: 15px; border-radius: 50%; background: #cce8ff; margin: -5px 5px 0 0; }
.tree .builtin { height: 35px; padding-left: 29px; font-style: italic; font-size: 14px; letter-spacing: .3px; }
.tree .amz { padding-left: 50px; font-style: italic; font-size: 14px; letter-spacing: .2px; }

.main { width: 974px; }
.actions { height: 70px; padding: 14px 35px 0 25px; background: #f1f1f1; border-bottom: 1px solid #dcdcdc; display: flex; gap: 10px; }
.btn { height: 43px; padding: 0 0 0 16px; display: flex; align-items: center; gap: 8px; border: 1px solid #dadada; border-bottom-width: 3px; border-radius: 3px; background: #f2f2f2; font: inherit; font-size: 13.6px; color: #545b64; white-space: nowrap; }
.save { width: 137px; }
.view-v { width: 194px; }
.build { width: 140px; padding-left: 14px; }
.eval { width: 162px; margin-left: auto; padding-left: 15px; gap: 7px; }

.title { height: 70px; margin: 0; padding-left: 25px; display: flex; align-items: flex-end; font-size: 27.7px; font-weight: 300; line-height: 38px; }
.title a { width: 142px; color: #00a4e8; }
.title a, .slash { padding-bottom: 1px; }
.slash { width: 16px; }
.name { width: 332px; padding-left: 4px; border-bottom: 1px solid #a4b4b5; }
.values { height: 46px; margin: 20px 25px 0; display: flex; align-items: center; }
.values h2 { width: 141px; margin: -2px 0 0; font-size: 20px; font-weight: 400; white-space: nowrap; }
.q { margin-top: 6px; }
.values a { display: flex; align-items: center; color: #00a4e8; white-space: nowrap; }
.values .bulk { width: 92px; gap: 8px; margin: -2px 0 0 272px; }
.export { width: 97px; gap: 5px; }
.search { width: 308px; height: 46px; border: 1px solid #a6b6b7; display: flex; align-items: center; justify-content: space-between; padding: 0 7px 0 15px; color: #c8c8c8; font-size: 13.5px; }
.search span { margin-top: 2px; }
.newvalue { width: 924px; height: 50px; margin: 20px 25px; border: 3px solid #b4b1be; display: flex; align-items: center; padding: 0 15px 0 5px; color: #c6c6c6; }
.newvalue i { width: 1px; height: 17px; background: #111; }
.newvalue span { margin: 2px auto 0 -1px; }

.table { width: 924px; margin-left: 25px; border-top: 1px solid #b4b1be; font-size: 14px; }
.row { height: 66px; display: grid; grid-template-columns: 228px 138px 164px 1fr auto; align-items: center; padding: 0 21px 0 20px; border-bottom: 1px solid #b4b1be; color: #3f464b; }
.head { height: 72px; padding-bottom: 4px; color: #7f858a; }
.head .hq { display: inline-block; vertical-align: -4px; margin-left: 10px; }
.head .hb { margin-left: 11px; }
.head span { line-height: 18px; white-space: nowrap; }
.ph { color: #c8c8c8; font-size: 13.5px; }
.row .syn { padding-left: 5px; font-size: 13.8px; }
.del { color: #333; }
.pager { margin: 18px 33px 0 0; display: flex; align-items: center; justify-content: flex-end; gap: 3px; font-size: 14px; letter-spacing: .1px; }
```
